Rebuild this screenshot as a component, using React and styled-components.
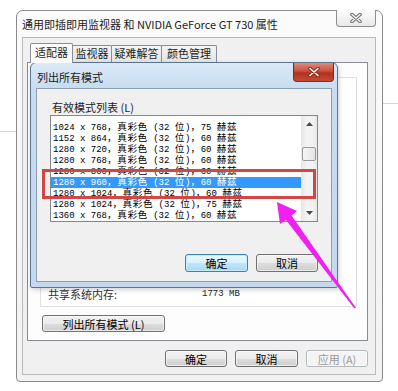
import React from "react";
import styled, { createGlobalStyle } from "styled-components";

const GlobalStyle = createGlobalStyle`
  html, body {
    margin: 0;
    padding: 0;
    background: #fff;
  }
  body {
    font-family: "Noto Sans CJK SC", "Liberation Sans", sans-serif;
  }
`;

const Desktop = styled.div`
  position: relative;
  width: 398px;
  height: 391px;
  box-sizing: border-box;
  padding: 10px 0 0 16px;
  overflow: hidden;
  background:
    linear-gradient(#d6d6d6, #d6d6d6) 0 131px / 16px 1px no-repeat,
    linear-gradient(#d6d6d6, #d6d6d6) 383px 103px / 15px 1px no-repeat,
    #fff;
`;

const Window = styled.div`
  width: 367px;
  height: 372px;
  box-sizing: border-box;
  display: flex;
  flex-direction: column;
  padding: 0 6px 6px 5px;
  border: 1px solid #8b8b8b;
  border-radius: 7px 7px 4px 4px;
  background: linear-gradient(#fbfbfb, #f2f2f2);
  font-size: 11px;
  color: #1e1e1e;
`;

const TitleBar = styled.div`
  height: 26px;
  flex: none;
  display: flex;
  justify-content: space-between;
  align-items: flex-start;
`;

const TitleText = styled.span`
  line-height: 26px;
  font-size: 11px;
  white-space: nowrap;
  color: #222;
`;

const WinClose = styled.div`
  width: 40px;
  height: 17px;
  margin-top: -1px;
  box-sizing: border-box;
  display: flex;
  align-items: center;
  justify-content: center;
  border: 1px solid #8e8e8e;
  border-top: none;
  border-radius: 0 0 4px 4px;
  background: linear-gradient(#fdfdfd, #e8e8e8);
`;

const Client = styled.div`
  flex: 1;
  display: flex;
  flex-direction: column;
  border: 1px solid #b9b9b9;
  background: #f0f0f0;
  padding: 5px 7px 7px 4px;
`;

const TabRow = styled.div`
  height: 19px;
  display: flex;
  align-items: flex-end;
  padding-left: 3px;
`;

const Tab = styled.div`
  position: relative;
  z-index: ${p => (p.$active ? 1 : 0)};
  width: ${p => p.$w}px;
  height: ${p => (p.$active ? 20 : 17)}px;
  margin-bottom: ${p => (p.$active ? -1 : 0)}px;
  margin-left: ${p => (p.$first ? 0 : -1)}px;
  box-sizing: border-box;
  border: 1px solid #898c95;
  border-bottom: none;
  border-radius: 2px 2px 0 0;
  background: ${p => (p.$active ? "#fdfdfd" : "linear-gradient(#f4f4f4, #e4e4e4)")};
  text-align: center;
  line-height: ${p => (p.$active ? 17 : 15)}px;
  font-size: 11px;
  white-space: nowrap;
`;

const TabPanel = styled.div`
  height: 279px;
  box-sizing: border-box;
  display: flex;
  flex-direction: column;
  align-items: flex-start;
  border: 1px solid #898c95;
  background: #fdfdfd;
  padding: 14px 10px 0 12px;
`;

const InfoBox = styled.div`
  align-self: stretch;
  height: 230px;
  box-sizing: border-box;
  display: flex;
  flex-direction: column;
  justify-content: flex-end;
  border: 1px solid #e0e0e0;
  background: #fff;
  padding: 0 0 5px 7px;
`;

const InfoRow = styled.div`
  display: flex;
  align-items: center;
  height: 14px;
`;

const InfoLabel = styled.span`
  width: 154px;
  font-size: 11px;
  color: #333;
`;

const InfoValue = styled.span`
  font-family: "Liberation Mono", monospace;
  font-size: 9px;
  color: #222;
`;

const Button = styled.button`
  width: ${p => p.$w || 62}px;
  height: ${p => p.$h || 17}px;
  margin-top: ${p => p.$mt || 0}px;
  margin-left: ${p => p.$ml || 0}px;
  box-sizing: border-box;
  padding: 0;
  font-family: inherit;
  font-size: 11px;
  line-height: 14px;
  border: 1px solid ${p => (p.$default ? "#3c7fb1" : p.disabled ? "#b5b8ba" : "#707070")};
  border-radius: 3px;
  color: ${p => (p.disabled ? "#9a9a9a" : "#000")};
  background: ${p =>
    p.$default
      ? "linear-gradient(#eaf6fd 0%, #d9f0fc 50%, #bee6fd 51%, #a7d9f5 100%)"
      : p.disabled
      ? "#f4f4f4"
      : "linear-gradient(#f2f2f2 0%, #ebebeb 50%, #dddddd 51%, #cfcfcf 100%)"};
  box-shadow: ${p => (p.$default ? "inset 0 0 0 1px #c8ecfb" : "inset 0 0 0 1px rgba(255,255,255,0.6)")};
`;

const ButtonRow = styled.div`
  display: flex;
  justify-content: flex-end;
  gap: 8px;
  margin-top: ${p => p.$mt || 0}px;
`;

/* inner "列出所有模式" dialog, floating over the property sheet */
const Dialog = styled.div`
  position: absolute;
  left: 30px;
  top: 62px;
  width: 308px;
  height: 226px;
  box-sizing: border-box;
  display: flex;
  flex-direction: column;
  padding: 0 5px 5px;
  border: 1px solid #587692;
  border-radius: 6px 6px 2px 2px;
  background: linear-gradient(#dbe9f7, #c8dcf0 26px, #c4d9ee);
  box-shadow: 1px 2px 5px rgba(0, 0, 0, 0.18);
  font-size: 11px;
  color: #1e1e1e;
`;

const DialogTitleBar = styled.div`
  height: 25px;
  flex: none;
  display: flex;
  justify-content: space-between;
  align-items: flex-start;
`;

const DialogTitle = styled.span`
  line-height: 29px;
  padding-left: 1px;
  font-size: 11px;
  color: #1a1a1a;
`;

const RedClose = styled.div`
  width: 41px;
  height: 19px;
  margin-right: -2px;
  box-sizing: border-box;
  display: flex;
  align-items: center;
  justify-content: center;
  border: 1px solid #7a2a22;
  border-top: none;
  border-radius: 0 0 4px 4px;
  background: linear-gradient(#e08a7c, #c9503f 45%, #b3321f 55%, #c44b35);
`;

const DialogClient = styled.div`
  flex: 1;
  display: flex;
  flex-direction: column;
  border: 1px solid #8ca0b5;
  background: #f0f0f0;
  padding: 11px 13px 0;
`;

const GroupLabel = styled.div`
  height: 14px;
  line-height: 14px;
  margin: 0 0 1px 2px;
  font-size: 11px;
  color: #222;
`;

const ListBox = styled.div`
  height: 107px;
  box-sizing: border-box;
  display: flex;
  border: 1px solid #828790;
  background: #fff;
`;

const ListItems = styled.div`
  flex: 1;
  padding-top: 6px;
`;

const ListItem = styled.div`
  height: 11px;
  line-height: 11px;
  padding-left: 2px;
  font-family: "Liberation Mono", "Noto Sans CJK SC", monospace;
  font-size: 9px;
  white-space: nowrap;
  background: ${p => (p.$selected ? "#3399ff" : "transparent")};
  color: ${p => (p.$selected ? "#fff" : "#000")};
`;

/* wide glyphs: same primary font so the line box stays 11px */
const Cjk = styled.span`
  font-size: 9.6px;
  letter-spacing: 0.6px;
`;

const ScrollBar = styled.div`
  width: 16px;
  display: flex;
  flex-direction: column;
  background: linear-gradient(90deg, #e6e6e6, #f3f3f3 35%, #f3f3f3 70%, #e8e8e8);
`;

const ScrollArrow = styled.div`
  height: 16px;
  display: flex;
  align-items: center;
  justify-content: center;
`;

const ScrollThumb = styled.div`
  height: 14px;
  margin: 15px 1px 0;
  box-sizing: border-box;
  border: 1px solid #9a9a9a;
  border-radius: 2px;
  background: linear-gradient(90deg, #f4f4f4, #e4e4e4);
`;

const ScrollSpacer = styled.div`
  flex: 1;
`;

const RedBox = styled.div`
  position: absolute;
  left: 42px;
  top: 169px;
  width: 274px;
  height: 30px;
  box-sizing: border-box;
  border: 3px solid #d24646;
`;

const Annotation = styled.svg`
  position: absolute;
  left: 0;
  top: 0;
  pointer-events: none;
`;

const modes = [
  ["1024 x 768", "75"],
  ["1152 x 864", "60"],
  ["1280 x 720", "60"],
  ["1280 x 768", "60"],
  ["1280 x 800", "60"],
  ["1280 x 960", "60"],
  ["1280 x 1024", "60"],
  ["1280 x 1024", "75"],
  ["1360 x 768", "60"],
];

const CrossIcon = ({ outline, fill }) => (
  <svg width="12" height="10" viewBox="0 0 12 10">
    <path d="M2 1.5 L10 8.5 M10 1.5 L2 8.5" stroke={outline} strokeWidth="3.6" strokeLinecap="round" />
    <path d="M2 1.5 L10 8.5 M10 1.5 L2 8.5" stroke={fill} strokeWidth="1.6" strokeLinecap="round" />
  </svg>
);

const Triangle = ({ up }) => (
  <svg width="7" height="4" viewBox="0 0 7 4">
    <path d={up ? "M0 4 L3.5 0 L7 4 Z" : "M0 0 L3.5 4 L7 0 Z"} fill="#4a4a4a" />
  </svg>
);

const App = () => (
  <Desktop>
    <GlobalStyle />
    <Window>
      <TitleBar>
        <TitleText>通用即插即用监视器 和 NVIDIA GeForce GT 730 属性</TitleText>
        <WinClose>
          <CrossIcon outline="#6f6f6f" fill="#f4f4f4" />
        </WinClose>
      </TitleBar>
      <Client>
        <TabRow>
          <Tab $active $first $w={43}>适配器</Tab>
          <Tab $w={40}>监视器</Tab>
          <Tab $w={51}>疑难解答</Tab>
          <Tab $w={56}>颜色管理</Tab>
        </TabRow>
        <TabPanel>
          <InfoBox>
            <InfoRow>
              <InfoLabel>共享系统内存:</InfoLabel>
              <InfoValue>1773 MB</InfoValue>
            </InfoRow>
          </InfoBox>
          <Button $w={123} $mt={8} $ml={2}>列出所有模式 (L)</Button>
        </TabPanel>
        <ButtonRow $mt={9}>
          <Button>确定</Button>
          <Button $w={63}>取消</Button>
          <Button disabled>应用 (A)</Button>
        </ButtonRow>
      </Client>
    </Window>

    <Dialog>
      <DialogTitleBar>
        <DialogTitle>列出所有模式</DialogTitle>
        <RedClose>
          <CrossIcon outline="#8a2a1c" fill="#ffffff" />
        </RedClose>
      </DialogTitleBar>
      <DialogClient>
        <GroupLabel>有效模式列表 (L)</GroupLabel>
        <ListBox>
          <ListItems>
            {modes.map(([res, hz], i) => (
              <ListItem key={i} $selected={i === 5}>
                {res}<Cjk>，真彩色</Cjk> (32 <Cjk>位</Cjk>)<Cjk>，</Cjk>{hz} <Cjk>赫兹</Cjk>
              </ListItem>
            ))}
          </ListItems>
          <ScrollBar>
            <ScrollArrow>
              <Triangle up />
            </ScrollArrow>
            <ScrollThumb />
            <ScrollSpacer />
            <ScrollArrow>
              <Triangle />
            </ScrollArrow>
          </ScrollBar>
        </ListBox>
        <ButtonRow $mt={32}>
          <Button $default $h={18} $w={63}>确定</Button>
          <Button $h={18} $w={62}>取消</Button>
        </ButtonRow>
      </DialogClient>
    </Dialog>

    <RedBox />
    <Annotation width="398" height="391" viewBox="0 0 398 391">
      <polygon
        points="277,202 297,211 291.5,215.5 356,308 354,308 286,220 280,224"
        fill="#f020f0"
      />
    </Annotation>
  </Desktop>
);

export default App;
